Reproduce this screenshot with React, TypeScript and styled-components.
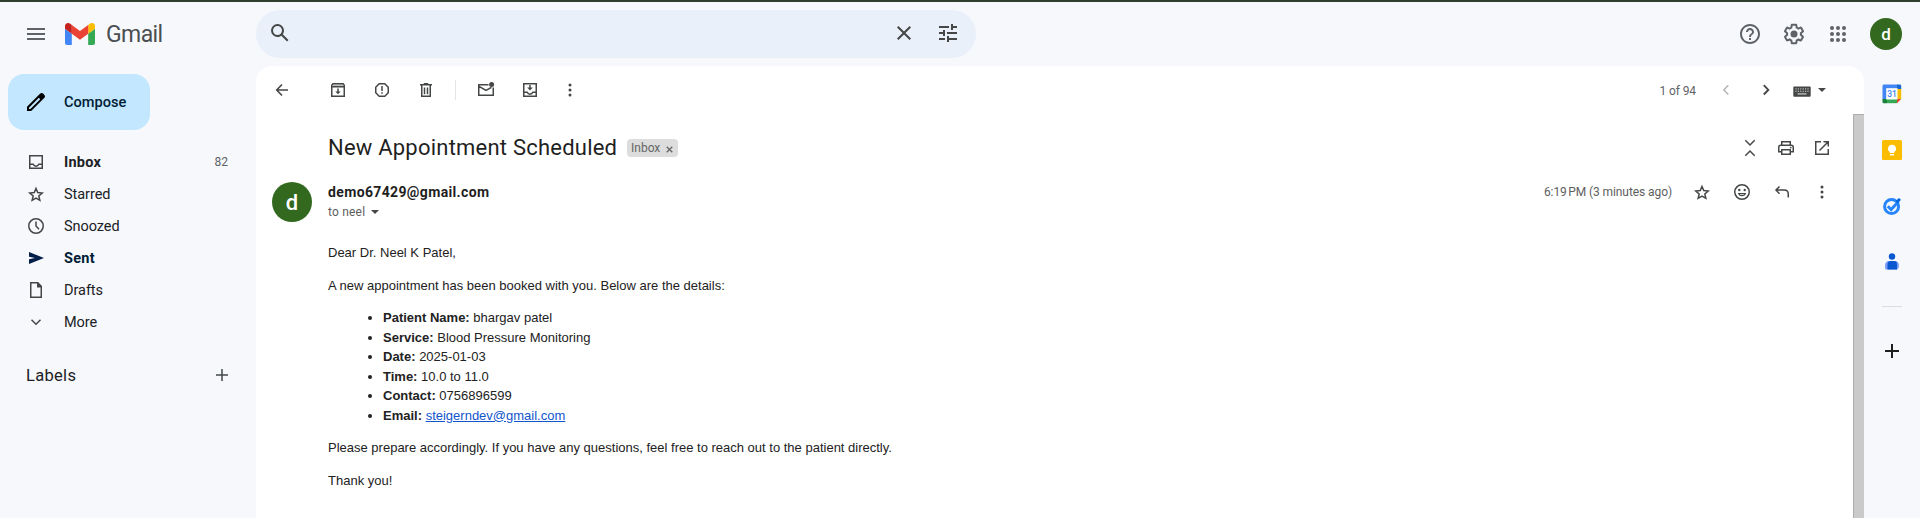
import React from 'react';
import styled, { createGlobalStyle } from 'styled-components';

const GlobalStyle = createGlobalStyle`
  *, *::before, *::after { box-sizing: border-box; }
  html, body { margin: 0; padding: 0; background: #f6f8fc; overflow: hidden; }
  body { font-family: Roboto, "Liberation Sans", sans-serif; color: #202124; }
`;

/* ---------- layout ---------- */

const Page = styled.div`
  width: 100%;
  height: 518px;
  display: flex;
  flex-direction: column;
  border-top: 2px solid #30402c;
  background: #f6f8fc;
  overflow: hidden;
`;

const Header = styled.header`
  height: 64px;
  flex: none;
  display: flex;
  align-items: center;
  padding: 0 18px 0 0;
`;

const Brand = styled.div`
  width: 256px;
  display: flex;
  align-items: center;
  padding-left: 24px;
`;

const BrandName = styled.span`
  margin: 2px 0 0 11px;
  font-size: 23px;
  line-height: 24px;
  letter-spacing: -0.6px;
  color: #4b4e51;
`;

const SearchBar = styled.div`
  width: 720px;
  height: 48px;
  border-radius: 24px;
  background: #e9f0fa;
  display: flex;
  align-items: center;
  padding: 0 6px 2px 12px;
`;

const Spacer = styled.div`
  flex: 1;
`;

const HeaderTools = styled.div`
  display: flex;
  align-items: center;
  gap: 20px;
`;

const Avatar = styled.div<{ $size: number; $font: number }>`
  width: ${(p) => p.$size}px;
  height: ${(p) => p.$size}px;
  border-radius: 50%;
  background: #33691e;
  color: #fff;
  font-size: ${(p) => p.$font}px;
  font-weight: 500;
  display: flex;
  align-items: center;
  justify-content: center;
  flex: none;
`;

const Columns = styled.div`
  flex: 1;
  display: flex;
  min-height: 0;
`;

const Sidebar = styled.aside`
  width: 256px;
  flex: none;
  padding-top: 8px;
`;

const ComposeButton = styled.button`
  width: 142px;
  height: 56px;
  margin: 0 0 16px 8px;
  padding: 0 0 0 16px;
  border: 0;
  border-radius: 16px;
  background: #c2e7ff;
  color: #001d35;
  display: flex;
  align-items: center;
  gap: 16px;
  font: 500 14.6px/20px Roboto, sans-serif;
`;

const NavRow = styled.div<{ $strong?: boolean; $active?: boolean }>`
  height: 32px;
  display: flex;
  align-items: center;
  padding: 0 28px 0 26px;
  gap: 18px;
  font-size: 14.5px;
  font-weight: ${(p) => (p.$strong || p.$active ? 700 : 400)};
  letter-spacing: ${(p) => (p.$strong || p.$active ? '0.25px' : '-0.05px')};
  color: ${(p) => (p.$active ? '#001d35' : '#202124')};
`;

const NavText = styled.span`
  flex: 1;
`;

const NavCount = styled.span`
  font-size: 12px;
  font-weight: 400;
  letter-spacing: 0;
  color: #5f6368;
`;

const LabelsRow = styled.div`
  height: 32px;
  margin-top: 21px;
  padding: 0 24px 0 26px;
  display: flex;
  align-items: center;
  justify-content: space-between;
  font-size: 16.5px;
  font-weight: 400;
  letter-spacing: 0.3px;
`;

const Main = styled.main`
  flex: 1;
  display: flex;
  flex-direction: column;
  background: #fff;
  border-radius: 16px 16px 0 0;
  overflow: hidden;
`;

const Toolbar = styled.div`
  height: 48px;
  flex: none;
  display: flex;
  align-items: center;
  padding: 0 35px 0 4px;
`;

const Slot = styled.div<{ $w: number }>`
  width: ${(p) => p.$w}px;
  display: flex;
  align-items: center;
  justify-content: center;
  flex: none;
`;

const BackSlot = styled(Slot)`
  margin-right: 12px;
`;

const ToolDivider = styled.div`
  width: 1px;
  height: 20px;
  margin: 0 8px 0 7px;
  background: #e3e5e8;
`;

const PageCount = styled.span`
  font-size: 12px;
  color: #5f6368;
  letter-spacing: -0.1px;
  margin: 1px 10px 0 0;
`;

const Scroller = styled.div`
  flex: 1;
  display: flex;
  min-height: 0;
`;

const Message = styled.section`
  flex: 1;
  padding-left: 16px;
`;

const ScrollThumb = styled.div`
  width: 11px;
  background: #cacaca;
  border-left: 1px solid #adadad;
  border-top: 1px solid #adadad;
`;

const SubjectRow = styled.div`
  display: flex;
  align-items: center;
  height: 68px;
  padding: 0 13px 0 56px;
`;

const Subject = styled.h2`
  margin: 0;
  font-size: 22px;
  line-height: 28px;
  font-weight: 400;
  letter-spacing: 0.22px;
  color: #1f1f1f;
  width: 288px;
  white-space: nowrap;
`;

const Chip = styled.span`
  margin-left: 11px;
  width: 51px;
  height: 18px;
  border-radius: 4px;
  background: #ddd;
  color: #666;
  display: flex;
  align-items: center;
  justify-content: space-between;
  padding: 0 4px;
  font-size: 12px;
`;

const SenderRow = styled.div`
  display: flex;
  height: 40px;
  padding-right: 11px;
`;

const SenderInfo = styled.div`
  margin-left: 16px;
  flex: 1;
  display: flex;
  flex-direction: column;
`;

const SenderName = styled.span`
  font-size: 14px;
  line-height: 20px;
  font-weight: 700;
  letter-spacing: 0.36px;
  color: #1f1f1f;
`;

const Recipient = styled.span`
  display: flex;
  align-items: center;
  gap: 6px;
  font-size: 12px;
  line-height: 20px;
  letter-spacing: 0.2px;
  color: #5e5e5e;
`;

const SenderMeta = styled.div`
  height: 20px;
  display: flex;
  align-items: center;
`;

const Timestamp = styled.span`
  font-size: 12px;
  letter-spacing: -0.08px;
  color: #5e5e5e;
  margin-right: 10px;
`;

const MailBody = styled.div`
  padding: 21px 0 0 56px;
  font: 13px/19.5px "Liberation Sans", Arial, sans-serif;
  color: #222;

  p { margin: 0 0 13px; }
  ul { margin: 0 0 13px; padding: 0 0 0 40px; }
  li { margin-left: 15px; }
  a { color: #1155cc; text-decoration: underline; }
`;

const SidePanel = styled.aside`
  width: 56px;
  flex: none;
  display: flex;
  flex-direction: column;
  align-items: center;
`;

const SideSlot = styled.div`
  height: 56px;
  display: flex;
  align-items: center;
  justify-content: center;
`;

const SideDivider = styled.div`
  width: 20px;
  height: 1px;
  margin: 16px 0;
  background: #dadce0;
`;

/* ---------- icons ---------- */

const IconSvg = styled.svg`
  display: block;
  flex: none;
`;

const LogoSvg = styled.svg`
  margin-left: 17px;
`;

const ChipCloseSvg = styled.svg`
  margin: 2px 1px 0 0;
`;

type IconProps = { size?: number; color?: string; children: React.ReactNode };

const Icon = ({ size = 20, color = '#444746', children }: IconProps) => (
  <IconSvg width={size} height={size} viewBox={`0 0 ${size} ${size}`} fill={color} color={color}>
    {children}
  </IconSvg>
);

const Line = ({ d, w = 1.5 }: { d: string; w?: number }) => (
  <path d={d} fill="none" stroke="currentColor" strokeWidth={w} />
);

const MenuIcon = () => (
  <Icon size={24} color="#5f6368"><path d="M3 18h18v-2H3v2zm0-5h18v-2H3v2zm0-7v2h18V6H3z" /></Icon>
);

const GmailLogo = () => (
  <LogoSvg width="30" height="22" viewBox="52 42 88 66" preserveAspectRatio="none">
    <path fill="#4285f4" d="M58 108h14V74L52 59v43c0 3.32 2.69 6 6 6" />
    <path fill="#34a853" d="M120 108h14c3.32 0 6-2.69 6-6V59l-20 15" />
    <path fill="#fbbc04" d="M120 48v26l20-15v-8c0-7.42-8.47-11.65-14.4-7.2" />
    <path fill="#ea4335" d="M72 74V48l24 18 24-18v26L96 92" />
    <path fill="#c5221f" d="M52 51v8l20 15V48l-5.6-4.2c-5.94-4.45-14.4-.22-14.4 7.2" />
  </LogoSvg>
);

const SearchIcon = () => (
  <Icon size={24}><path d="M20.49 19l-5.73-5.73C15.53 12.2 16 10.91 16 9.5A6.5 6.5 0 1 0 9.5 16c1.41 0 2.7-.47 3.77-1.24L19 20.49 20.49 19zM5 9.5C5 7.01 7.01 5 9.5 5S14 7.01 14 9.5 11.99 14 9.5 14 5 11.99 5 9.5z" /></Icon>
);

const CloseIcon = () => (
  <Icon size={24}><path d="M19 6.41L17.59 5 12 10.59 6.41 5 5 6.41 10.59 12 5 17.59 6.41 19 12 13.41 17.59 19 19 17.59 13.41 12z" /></Icon>
);

const TuneIcon = () => (
  <Icon size={24}><path d="M3 17v2h6v-2H3zM3 5v2h10V5H3zm10 16v-2h8v-2h-8v-2h-2v6h2zM7 9v2H3v2h4v2h2V9H7zm14 4v-2H11v2h10zm-6-4h2V7h4V5h-4V3h-2v6z" /></Icon>
);

const HelpIcon = () => (
  <Icon size={24} color="#5f6368"><path d="M11 18h2v-2h-2v2zm1-16C6.48 2 2 6.48 2 12s4.48 10 10 10 10-4.48 10-10S17.52 2 12 2zm0 18c-4.41 0-8-3.59-8-8s3.59-8 8-8 8 3.59 8 8-3.59 8-8 8zm0-14c-2.21 0-4 1.79-4 4h2c0-1.1.9-2 2-2s2 .9 2 2c0 2-3 1.75-3 5h2c0-2.25 3-2.5 3-5 0-2.21-1.79-4-4-4z" /></Icon>
);

const SettingsIcon = () => (
  <Icon size={24} color="#5f6368">
    <path d="M13.85 22.25h-3.7c-.74 0-1.36-.54-1.45-1.27l-.27-1.89c-.27-.14-.53-.29-.79-.46l-1.8.72c-.7.26-1.47-.03-1.81-.65L2.2 15.53c-.35-.66-.2-1.44.36-1.88l1.53-1.19c-.01-.15-.02-.3-.02-.46 0-.15.01-.31.02-.46l-1.52-1.19c-.59-.45-.74-1.26-.37-1.88l1.85-3.19c.34-.62 1.11-.9 1.79-.63l1.81.73c.26-.17.52-.32.78-.46l.27-1.91c.09-.7.71-1.25 1.44-1.25h3.7c.74 0 1.36.54 1.45 1.27l.27 1.89c.27.14.53.29.79.46l1.8-.72c.71-.26 1.48.03 1.82.65l1.84 3.18c.36.66.2 1.44-.36 1.88l-1.52 1.19c.01.15.02.3.02.46s-.01.31-.02.46l1.52 1.19c.56.45.72 1.23.37 1.86l-1.86 3.22c-.34.62-1.11.9-1.8.63l-1.8-.72c-.26.17-.52.32-.78.46l-.27 1.91c-.1.68-.72 1.22-1.46 1.22zm-3.23-2h2.76l.37-2.55.53-.22c.44-.18.88-.44 1.34-.78l.45-.34 2.38.96 1.38-2.4-2.03-1.58.07-.56c.03-.26.06-.51.06-.78s-.03-.53-.06-.78l-.07-.56 2.03-1.58-1.39-2.4-2.39.96-.45-.35c-.42-.32-.87-.58-1.33-.77l-.52-.22-.37-2.55h-2.76l-.37 2.55-.53.21c-.44.19-.88.44-1.34.79l-.45.33-2.38-.95-1.39 2.39 2.03 1.58-.07.56a7 7 0 0 0-.06.79c0 .26.02.53.06.78l.07.56-2.03 1.58 1.38 2.4 2.39-.96.45.35c.43.33.86.58 1.33.77l.53.22.38 2.55z" />
    <circle cx="12" cy="12" r="3.5" />
  </Icon>
);

const AppsIcon = () => (
  <Icon size={24} color="#5f6368">
    {[6, 12, 18].map((y) => [6, 12, 18].map((x) => <circle key={`${x}-${y}`} cx={x} cy={y} r="2" />))}
  </Icon>
);

const PencilIcon = () => (
  <Icon size={24} color="#000"><path d="M20.41 4.94l-1.35-1.35c-.78-.78-2.05-.78-2.83 0L3 16.82V21h4.18L20.41 7.77c.79-.78.79-2.05 0-2.83zm-14 14.12L5 19v-1.36l9.82-9.82 1.41 1.41-9.82 9.83z" /></Icon>
);

const InboxIcon = () => (
  <Icon><Line d="M3.75 3.75h12.5v12.5H3.75zM4 12.25h3.2c.5 1.2 1.5 1.9 2.8 1.9s2.3-.7 2.8-1.9H16" /></Icon>
);

const StarIcon = () => (
  <Icon><Line d="M10 4.5l1.75 4.1 4.45.4-3.37 2.95 1 4.35L10 14l-3.83 2.3 1-4.35L3.8 9l4.45-.4z" /></Icon>
);

const ClockIcon = () => (
  <Icon><circle cx="10" cy="10" r="7.25" fill="none" stroke="currentColor" strokeWidth="1.5" /><Line d="M10 5.5V10l3 3.2" /></Icon>
);

const SendIcon = () => (
  <Icon color="#041e49"><path d="M3 4v4.8l6 1.2-6 1.2V16l15-6z" /></Icon>
);

const DraftIcon = () => (
  <Icon>
    <Line d="M4.75 2.75h7l3.5 3.5v11H4.75z" />
    <path d="M11 2.5h1l3.5 3.8V7.5H11z" />
  </Icon>
);

const MoreNavIcon = () => (
  <Icon><Line w={1.5} d="M5.5 7.7l4.5 4.5 4.5-4.5" /></Icon>
);

const PlusIcon = ({ color = '#444746', w = 1.5, r = 6 }: { color?: string; w?: number; r?: number }) => (
  <Icon color={color}><Line w={w} d={`M${10 - r} 10h${2 * r}M10 ${10 - r}v${2 * r}`} /></Icon>
);

const BackIcon = () => (
  <Icon><Line w={1.6} d="M16 10H5M10 4.5L4.7 10l5.3 5.5" /></Icon>
);

const ArchiveIcon = () => (
  <Icon>
    <Line d="M3.75 5.2l1.2-1.45h10.1l1.2 1.45v11.05H3.75zM3.75 6.75h12.5" />
    <path d="M9.25 8.5h1.5v3h2L10 14.3l-2.75-2.8h2z" />
    <path d="M5 4.5h10v1.6H5z" opacity=".35" />
  </Icon>
);

const ReportIcon = () => (
  <Icon>
    <Line d="M7.2 3.75h5.6l3.45 3.45v5.6l-3.45 3.45H7.2L3.75 12.8V7.2z" />
    <path d="M9.25 6h1.5v5h-1.5zM9.25 12.3h1.5v1.5h-1.5z" />
  </Icon>
);

const TrashIcon = () => (
  <Icon>
    <Line d="M4 4.75h12M5.75 5v11.25h8.5V5M8.5 7.5v6.8M11.5 7.5v6.8" />
    <path d="M7.8 3h4.4v1.5H7.8z" />
  </Icon>
);

const UnreadIcon = () => (
  <Icon>
    <Line d="M12.5 4.75H2.75v10.5h14.5V7.5M3 6.3l7 4.2 5.5-3.2" />
    <circle cx="15.6" cy="4.6" r="2.5" />
  </Icon>
);

const MoveIcon = () => (
  <Icon>
    <Line d="M3.75 3.75h12.5v12.5H3.75zM4 12.25h3.2c.5 1.2 1.5 1.9 2.8 1.9s2.3-.7 2.8-1.9H16" />
    <path d="M9.25 5h1.5v2.6h2.1L10 10.6 7.15 7.6h2.1z" />
  </Icon>
);

const DotsIcon = () => (
  <Icon><circle cx="10" cy="5" r="1.5" /><circle cx="10" cy="10" r="1.5" /><circle cx="10" cy="15" r="1.5" /></Icon>
);

const PrevIcon = () => (
  <Icon color="#b4b5b5"><Line w={1.5} d="M12.3 5.2L7.8 9.9l4.5 4.6" /></Icon>
);

const NextIcon = () => (
  <Icon><Line w={1.9} d="M7.8 5.2l4.5 4.7-4.5 4.6" /></Icon>
);

const KeyboardIcon = () => (
  <Icon>
    <rect x="1.3" y="6.5" width="17.4" height="10.3" rx="1" />
    {[0, 1].map((r) => [0, 1, 2, 3, 4, 5].map((c) => (
      <rect key={`${r}-${c}`} x={3.4 + c * 2.4} y={8.3 + r * 2.4} width="1.2" height="1.2" fill="#bbb" />
    )))}
    <rect x="5.5" y="13.3" width="9" height="1.2" fill="#ccc" />
  </Icon>
);

const CaretIcon = () => (
  <IconSvg width="8" height="4" viewBox="0 0 8 4" fill="#444746"><path d="M0 0h8L4 4z" /></IconSvg>
);

const CollapseIcon = () => (
  <Icon><Line d="M5.3 2.3L10 7l4.7-4.7M5.3 17.7L10 13l4.7 4.7" /></Icon>
);

const PrintIcon = () => (
  <Icon>
    <Line d="M5.75 6.5V3.75h8.5V6.5M5.5 13.75H2.75v-4.5c0-1.2.8-2 2-2h10.5c1.2 0 2 .8 2 2v4.5H14.5M5.75 11.75h8.5v4.5h-8.5z" />
    <circle cx="14.7" cy="9.6" r=".9" />
  </Icon>
);

const OpenIcon = () => (
  <Icon><Line d="M9 3.75H3.75v12.5h12.5V11M11.5 3.75h4.75V8.5M16 4L7.5 12.5" /></Icon>
);

const SmileIcon = () => (
  <Icon>
    <circle cx="10" cy="10" r="7.25" fill="none" stroke="currentColor" strokeWidth="1.5" />
    <circle cx="7.3" cy="8" r="1.2" />
    <circle cx="12.7" cy="8" r="1.2" />
    <path d="M5.8 11h8.4c-.5 2-2.1 3.3-4.2 3.3S6.3 13 5.8 11z" />
    <path d="M7.7 12.2h4.6c-.5.6-1.3.9-2.3.9s-1.8-.3-2.3-.9z" fill="#fff" />
  </Icon>
);

const ReplyIcon = () => (
  <Icon><Line d="M7.5 4.5L4 8.1l3.5 3.6M4.2 8.1h8c2.5 0 4.05 1.6 4.05 4V15.5" /></Icon>
);

const ChipClose = () => (
  <ChipCloseSvg width="7" height="7" viewBox="0 0 7 7"><path d="M.7.7l5.6 5.6M6.3.7L.7 6.3" stroke="#666" strokeWidth="1.3" /></ChipCloseSvg>
);

const CalendarIcon = () => (
  <Icon>
    <path d="M2 .5h13.5V5H5v10.5H.5V2C.5 1.2 1.2.5 2 .5z" fill="#4285f4" />
    <path d="M15 .5h2.7c1 0 1.5.5 1.5 1.5V5H15z" fill="#1967d2" />
    <path d="M15 5h4.2v10H15z" fill="#fbbc04" />
    <path d="M5 15h10v4.2H5z" fill="#34a853" />
    <path d="M.5 15H5v4.2H2c-1 0-1.5-.5-1.5-1.5z" fill="#188038" />
    <path d="M15 15h4.2L15 19.2z" fill="#ea4335" />
    <path d="M4.2 4.2h11.300v11.300H4.200z" fill="#fff" />
    <text x="10" y="13" textAnchor="middle" fontSize="8.5" fontWeight="500" fontFamily="Roboto, sans-serif" fill="#4285f4">31</text>
  </Icon>
);

const KeepIcon = () => (
  <Icon>
    <rect width="20" height="20" rx="1.5" fill="#fbbc04" />
    <path d="M10 4.8a4 4 0 0 0-2.3 7.3V13h4.6v-.9A4 4 0 0 0 10 4.8zM8 14h4v1.5H8z" fill="#fff" />
  </Icon>
);

const TasksIcon = () => (
  <Icon>
    <circle cx="9.6" cy="10.5" r="7" fill="none" stroke="#2684fc" strokeWidth="3" />
    <path d="M5.8 10.2l3.3 3.3 7.2-7.7" fill="none" stroke="#2684fc" strokeWidth="3" />
    <path d="M13.6 5.2L16.8 2l2.2 1.7-3.5 4z" fill="#0066da" />
  </Icon>
);

const ContactsIcon = () => (
  <Icon>
    <circle cx="10" cy="4.5" r="3.2" fill="#0b57d0" />
    <path d="M7 9h6c2.4 0 4 1.7 4 4.2 0 2.6-1 4.3-2.5 4.3h-9C4 17.5 3 17.5 3 16v-2.8C3 10.7 4.6 9 7 9z" fill="#7b9ef9" />
    <path d="M8.5 9h4c1.6 0 2.5 1.5 2.5 3.5v5H5.5v-5C5.5 10.5 6.7 9 8.5 9z" fill="#0b57d0" />
  </Icon>
);

/* ---------- page ---------- */

const navItems = [
  { label: 'Inbox', icon: <InboxIcon />, count: '82', strong: true },
  { label: 'Starred', icon: <StarIcon /> },
  { label: 'Snoozed', icon: <ClockIcon /> },
  { label: 'Sent', icon: <SendIcon />, active: true },
  { label: 'Drafts', icon: <DraftIcon /> },
  { label: 'More', icon: <MoreNavIcon /> },
];

const details = [
  ['Patient Name:', 'bhargav patel'],
  ['Service:', 'Blood Pressure Monitoring'],
  ['Date:', '2025-01-03'],
  ['Time:', '10.0 to 11.0'],
  ['Contact:', '0756896599'],
];

export default function App() {
  return (
    <>
      <GlobalStyle />
      <Page>
        <Header>
          <Brand>
            <MenuIcon />
            <GmailLogo />
            <BrandName>Gmail</BrandName>
          </Brand>
          <SearchBar>
            <SearchIcon />
            <Spacer />
            <Slot $w={44}><CloseIcon /></Slot>
            <Slot $w={44}><TuneIcon /></Slot>
          </SearchBar>
          <Spacer />
          <HeaderTools>
            <HelpIcon />
            <SettingsIcon />
            <AppsIcon />
            <Avatar $size={32} $font={17}>d</Avatar>
          </HeaderTools>
        </Header>
        <Columns>
          <Sidebar>
            <ComposeButton><PencilIcon />Compose</ComposeButton>
            <nav>
              {navItems.map((item) => (
                <NavRow key={item.label} $strong={item.strong} $active={item.active}>
                  {item.icon}
                  <NavText>{item.label}</NavText>
                  {item.count && <NavCount>{item.count}</NavCount>}
                </NavRow>
              ))}
            </nav>
            <LabelsRow>Labels<PlusIcon /></LabelsRow>
          </Sidebar>
          <Main>
            <Toolbar>
              <BackSlot $w={44}><BackIcon /></BackSlot>
              <Slot $w={44}><ArchiveIcon /></Slot>
              <Slot $w={44}><ReportIcon /></Slot>
              <Slot $w={44}><TrashIcon /></Slot>
              <ToolDivider />
              <Slot $w={44}><UnreadIcon /></Slot>
              <Slot $w={44}><MoveIcon /></Slot>
              <Slot $w={36}><DotsIcon /></Slot>
              <Spacer />
              <PageCount>1 of 94</PageCount>
              <Slot $w={40}><PrevIcon /></Slot>
              <Slot $w={40}><NextIcon /></Slot>
              <Slot $w={32}><KeyboardIcon /></Slot>
              <Slot $w={8}><CaretIcon /></Slot>
              <Slot $w={3} />
            </Toolbar>
            <Scroller>
              <Message>
                <SubjectRow>
                  <Subject>New Appointment Scheduled</Subject>
                  <Chip>Inbox<ChipClose /></Chip>
                  <Spacer />
                  <Slot $w={36}><CollapseIcon /></Slot>
                  <Slot $w={36}><PrintIcon /></Slot>
                  <Slot $w={36}><OpenIcon /></Slot>
                </SubjectRow>
                <SenderRow>
                  <Avatar $size={40} $font={22}>d</Avatar>
                  <SenderInfo>
                    <SenderName>demo67429@gmail.com</SenderName>
                    <Recipient>to neel <CaretIcon /></Recipient>
                  </SenderInfo>
                  <SenderMeta>
                    <Timestamp>6:19{'\u202f'}PM (3 minutes ago)</Timestamp>
                    <Slot $w={40}><StarIcon /></Slot>
                    <Slot $w={40}><SmileIcon /></Slot>
                    <Slot $w={40}><ReplyIcon /></Slot>
                    <Slot $w={40}><DotsIcon /></Slot>
                  </SenderMeta>
                </SenderRow>
                <MailBody>
                  <p>Dear Dr. Neel K Patel,</p>
                  <p>A new appointment has been booked with you. Below are the details:</p>
                  <ul>
                    {details.map(([name, value]) => (
                      <li key={name}><b>{name}</b> {value}</li>
                    ))}
                    <li><b>Email:</b> <a>steigerndev@gmail.com</a></li>
                  </ul>
                  <p>Please prepare accordingly. If you have any questions, feel free to reach out to the patient directly.</p>
                  <p>Thank you!</p>
                </MailBody>
              </Message>
              <ScrollThumb />
            </Scroller>
          </Main>
          <SidePanel>
            <SideSlot><CalendarIcon /></SideSlot>
            <SideSlot><KeepIcon /></SideSlot>
            <SideSlot><TasksIcon /></SideSlot>
            <SideSlot><ContactsIcon /></SideSlot>
            <SideDivider />
            <SideSlot><PlusIcon color="#1f1f1f" w={2} r={7} /></SideSlot>
          </SidePanel>
        </Columns>
      </Page>
    </>
  );
}
